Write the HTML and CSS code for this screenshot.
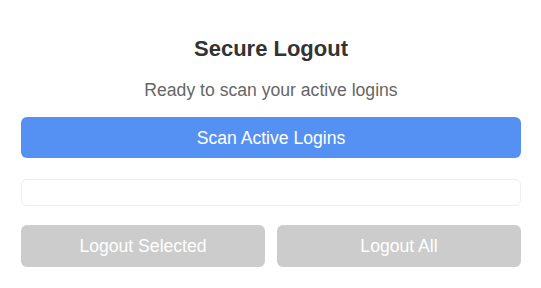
FILE: index.html
```html
<!DOCTYPE html>
<html lang="en">
<head>
<meta charset="utf-8">
<title>Secure Logout</title>
<link rel="stylesheet" href="styles.css">
</head>
<body>
<main class="panel">
  <h1 class="title">Secure Logout</h1>
  <p class="status">Ready to scan your active logins</p>
  <button class="btn btn-primary">Scan Active Logins</button>
  <div class="results"></div>
  <div class="actions">
    <button class="btn btn-disabled" disabled>Logout Selected</button>
    <button class="btn btn-disabled" disabled>Logout All</button>
  </div>
</main>
</body>
</html>
```

FILE: styles.css
```css
html, body {
  margin: 0;
  padding: 0;
  background: #ffffff;
}

body {
  font-family: "Liberation Sans", Arial, sans-serif;
}

.panel {
  padding: 0 20px 0 21px;
  display: flex;
  flex-direction: column;
}

.title {
  margin: 36px 0 0;
  font-size: 22px;
  line-height: 25px;
  font-weight: bold;
  color: #333333;
  text-align: center;
}

.status {
  margin: 19px 0 0;
  font-size: 17.6px;
  line-height: 20px;
  color: #666666;
  text-align: center;
}

.btn {
  font-family: "Liberation Sans", Arial, sans-serif;
  font-size: 17.6px;
  line-height: 20px;
  padding: 10.5px 12px;
  border: none;
  border-radius: 6px;
  color: #ffffff;
  text-align: center;
}

.btn-primary {
  margin-top: 17px;
  background: #5590f3;
  width: 100%;
}

.results {
  margin-top: 21px;
  height: 25px;
  border: 1px solid #eeeeee;
  border-radius: 6px;
}

.actions {
  margin-top: 19px;
  display: grid;
  grid-template-columns: 1fr 1fr;
  gap: 12px;
}

.btn-disabled {
  background: #cccccc;
  height: 42px;
}
```
